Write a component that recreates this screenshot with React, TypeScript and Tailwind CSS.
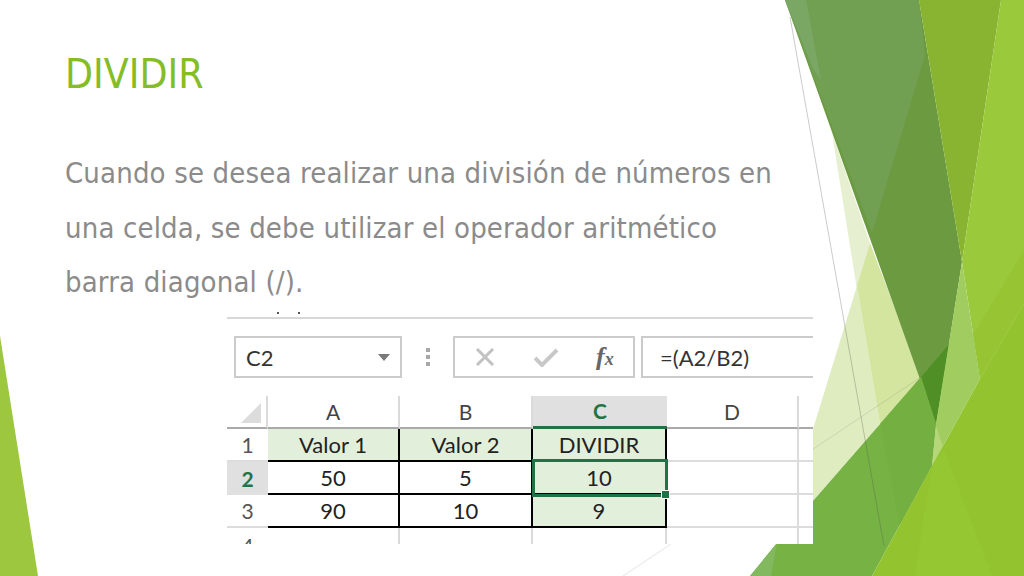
import React from 'react';

const bodyFont = 'font-["DejaVu_Sans_Condensed","DejaVu_Sans",sans-serif]';

const Facets = () => (
  <svg className="absolute inset-0" width="1024" height="576" viewBox="0 0 1024 576">
    <polygon points="0,336 38,576 0,576" fill="#9dc73f" />
    {/* pale facets behind the dark wedge */}
    <polygon points="832,133 870,243 857,290" fill="#e6f0d0" />
    <polygon points="857,286 813,429 813,501 880,424" fill="#dfecbf" />
    <polygon points="870,243 921,377 880,424 857,286" fill="#d3e59f" />
    {/* dark wedge from the top */}
    <polygon points="785,0 919,0 962,262 949,344 936,424" fill="#6b9a40" />
    <polygon points="785,0 919,0 925,55 872,233" fill="#72a053" />
    <polygon points="785,0 806,0 821,80 814,70" fill="#7ba765" />
    <polygon points="919,0 1001,0 962,262" fill="#88b431" />
    {/* mid green */}
    <polygon points="750,576 777,543 813,501 921,377 949,344 936,424 932,466 872,576" fill="#76b244" />
    <polygon points="921,377 949,344 936,424" fill="#4f8f25" />
    <polygon points="750,576 777,543 771,576" fill="#82b85e" />
    <polygon points="880,424 921,377 936,424 932,466 900,525" fill="#74af41" />
    {/* right hand facets */}
    <polygon points="1001,0 1024,0 1024,303 980,379 962,262" fill="#9ac93c" />
    <polygon points="1024,250 1024,303 980,379 973,335" fill="#96c433" />
    <polygon points="962,262 980,379 932,466 936,424" fill="#a1cc60" />
    <polygon points="936,426 944,450 932,466" fill="#b5d779" />
    {/* bright green corner */}
    <polygon points="872,576 932,466 980,379 1024,303 1024,576" fill="#93c42f" />
    <polygon points="915,576 932,466 944,450 992,576" fill="#95c733" />
    {/* hairlines */}
    <line x1="790" y1="17" x2="884" y2="546" stroke="#555" strokeWidth="1" opacity="0.3" />
    <line x1="623" y1="576" x2="921" y2="377" stroke="#555" strokeWidth="1" opacity="0.15" />
  </svg>
);

const Cell = ({ children, className = '' }: { children?: React.ReactNode; className?: string }) => (
  <div className={`flex items-center justify-center text-[22px] text-[#222] border-r-2 border-b-2 border-black ${className}`}>
    {children}
  </div>
);

const ColHead = ({ label, active }: { label: string; active?: boolean }) => (
  <div
    className={`flex items-center justify-center text-[21px] ${
      active
        ? 'bg-[#e0e0e0] text-[#1f7346] font-bold border-b-[3px] border-b-[#217346]'
        : 'text-[#444] border-r-2 border-[#dadada] border-b-2 border-b-[#a9a9a9]'
    }`}
  >
    {label}
  </div>
);

const RowHead = ({ label, active }: { label: string; active?: boolean }) => (
  <div
    className={`flex items-center justify-center text-[21px] ${
      active ? 'bg-[#e0e0e0] text-[#1f7346] font-bold' : 'text-[#555] border-b-2 border-[#dcdcdc]'
    }`}
  >
    {label}
  </div>
);

const Blank = () => (
  <>
    <div className="border-r-2 border-b-2 border-[#dcdcdc]" />
    <div className="border-b-2 border-[#dcdcdc]" />
  </>
);

const ExcelShot = () => (
  <div className='relative ml-[227px] w-[586px] h-[236px] bg-white font-["Lato",sans-serif]'>
    <div className="h-[9px] flex items-start gap-[19px] pl-[50px] pt-[4px]">
      <span className="size-[2px] bg-[#555]" />
      <span className="size-[2px] bg-[#555]" />
    </div>
    <div className="h-[2px] bg-[#d8d8d8]" />

    {/* formula bar */}
    <div className="flex mt-[17px] h-[42px] pl-[7px]">
      <div className="w-[168px] border-2 border-[#cbcbcb] flex items-center justify-between pl-[10px] pr-[10px] text-[22px] text-[#333]">
        C2
        <span className="w-0 h-0 border-x-[6px] border-x-transparent border-t-[7px] border-t-[#7a7a7a]" />
      </div>
      <div className="w-[51px] flex flex-col items-center justify-center gap-[3px]">
        <span className="size-[4px] bg-[#a8a8a8]" />
        <span className="size-[4px] bg-[#a8a8a8]" />
        <span className="size-[4px] bg-[#a8a8a8]" />
      </div>
      <div className="w-[182px] border-2 border-[#cbcbcb] flex items-center pl-[20px]">
        <svg width="20" height="18" viewBox="0 0 20 18">
          <path d="M2 1 L18 17 M18 1 L2 17" stroke="#c2c2c2" strokeWidth="3" fill="none" />
        </svg>
        <svg className="ml-[39px]" width="24" height="20" viewBox="0 0 24 20">
          <path d="M1 11 L8 18 L23 3" stroke="#c8c8c8" strokeWidth="4" fill="none" />
        </svg>
        <span className='ml-[38px] font-["Liberation_Serif",serif] italic font-bold text-[26px] text-[#666] leading-none'>
          f<span className="text-[18px]">x</span>
        </span>
      </div>
      <div className="w-[172px] ml-[6px] border-y-2 border-l-2 border-[#cbcbcb] flex items-center pl-[17px] text-[22px] text-[#333]">
        =(A2/B2)
      </div>
    </div>

    {/* sheet */}
    <div className="relative mt-[18px] grid grid-cols-[41px_132px_133px_134px_132px_14px] grid-rows-[33px_33px_33px_33px_16px] overflow-hidden">
      <div className="border-r-2 border-[#dadada] border-b-2 border-b-[#a9a9a9] flex items-end justify-end pr-[5px] pb-[4px]">
        <span className="w-0 h-0 border-l-[20px] border-l-transparent border-b-[20px] border-b-[#dcdcdc]" />
      </div>
      <ColHead label="A" />
      <ColHead label="B" />
      <ColHead label="C" active />
      <ColHead label="D" />
      <div className="border-b-2 border-b-[#a9a9a9]" />

      <RowHead label="1" />
      <Cell className="bg-[#e2efda]">Valor 1</Cell>
      <Cell className="bg-[#e2efda]">Valor 2</Cell>
      <Cell className="bg-[#e2efda]">DIVIDIR</Cell>
      <Blank />

      <RowHead label="2" active />
      <Cell>50</Cell>
      <Cell>5</Cell>
      <Cell className="bg-[#e2efda]">10</Cell>
      <Blank />

      <RowHead label="3" />
      <Cell>90</Cell>
      <Cell>10</Cell>
      <Cell className="bg-[#e2efda]">9</Cell>
      <Blank />

      <div className="flex justify-center pt-[6px] text-[21px] leading-[24px] text-[#555] overflow-hidden">4</div>
      <div className="border-r-2 border-[#dadada]" />
      <div className="border-r-2 border-[#dadada]" />
      <div className="border-r-2 border-[#dadada]" />
      <div className="border-r-2 border-[#dadada]" />
      <div />

      {/* selected cell C2 */}
      <div className="absolute left-[305px] top-[63px] w-[136px] h-[38px] border-[3px] border-[#217346]">
        <span className="absolute -right-[5px] -bottom-[5px] size-[9px] bg-[#217346] border border-white" />
      </div>
    </div>
  </div>
);

export default function App() {
  return (
    <div className={`relative w-[1024px] h-[576px] overflow-hidden bg-white ${bodyFont}`}>
      <Facets />
      <div className="relative flex flex-col h-full">
        <div className="h-[308px] pl-[65px] pt-[50px]">
          <h1 className="text-[40.5px] leading-[48px] text-[#84bd24]">DIVIDIR</h1>
          <p className="mt-[48px] w-[720px] text-[29px] tracking-[0.15px] leading-[54.5px] text-[#8b8b8b]">
            Cuando se desea realizar una división de números en una celda, se debe utilizar el operador aritmético barra diagonal (/).
          </p>
        </div>
        <ExcelShot />
      </div>
    </div>
  );
}
